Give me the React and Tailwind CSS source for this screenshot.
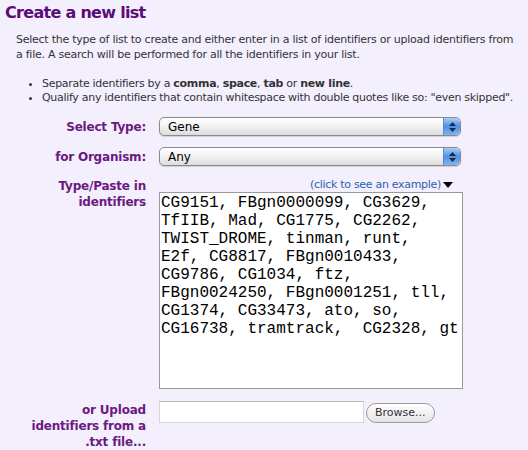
import React from "react";

const ids = [
  "CG9151, FBgn0000099, CG3629,",
  "TfIIB, Mad, CG1775, CG2262,",
  "TWIST_DROME, tinman, runt,",
  "E2f, CG8817, FBgn0010433,",
  "CG9786, CG1034, ftz,",
  "FBgn0024250, FBgn0001251, tll,",
  "CG1374, CG33473, ato, so,",
  "CG16738, tramtrack,  CG2328, gt",
].join("\n");

const Stepper = () => (
  <div className="w-[17px] h-full rounded-r-[5px] border-l border-[#5d87c9] bg-gradient-to-b from-[#a8cdf7] via-[#4f8fe6] to-[#7fb5f3] flex flex-col items-center justify-center gap-[2px]">
    <svg width="7" height="4" viewBox="0 0 7 4">
      <path d="M3.5 0 L7 4 L0 4 Z" fill="#1b2a44" />
    </svg>
    <svg width="7" height="4" viewBox="0 0 7 4">
      <path d="M0 0 L7 0 L3.5 4 Z" fill="#1b2a44" />
    </svg>
  </div>
);

const FakeSelect = ({ value }) => (
  <div className="w-[302px] h-[19px] rounded-[5px] border border-[#8a8a8a] bg-gradient-to-b from-white via-[#f1f1f1] to-[#dcdcdc] flex items-stretch shadow-[0_1px_1px_rgba(0,0,0,0.15)]">
    <span className="flex-1 pl-[8px] text-[12px] leading-[18px] text-black">
      {value}
    </span>
    <Stepper />
  </div>
);

const Label = ({ children }) => (
  <div className="text-right text-[12px] font-bold leading-[16px] tracking-[-0.2px] text-[#6b1a80]">
    {children}
  </div>
);

export default function App() {
  return (
    <div className="w-[528px] h-[450px] overflow-hidden bg-[#f3effd] font-['DejaVu_Sans',sans-serif]">
      {/* Heading */}
      <h1 className="pl-[5px] pt-[2px] text-[16px] font-bold leading-[22px] tracking-[-0.7px] text-[#5c0c78]">
        Create a new list
      </h1>

      {/* Intro */}
      <p className="mt-[8px] pl-[16px] pr-[2px] text-[11px] leading-[15px] text-[#333] tracking-[-0.25px] whitespace-nowrap">
        Select the type of list to create and either enter in a list of
        identifiers or upload identifiers from
        <br />a file. A search will be performed for all the identifiers in
        your list.
      </p>

      <ul className="mt-[15px] pl-[42px] list-disc text-[11px] leading-[14px] text-[#333] tracking-[-0.3px]">
        <li>
          Separate identifiers by a <b>comma</b>, <b>space</b>, <b>tab</b> or{" "}
          <b>new line</b>.
        </li>
        <li>
          Qualify any identifiers that contain whitespace with double quotes
          like so: "even skipped".
        </li>
      </ul>

      {/* Form */}
      <div className="mt-[12px] grid grid-cols-[146px_1fr] gap-x-[13px]">
        <div className="pt-[2px]">
          <Label>Select Type:</Label>
        </div>
        <FakeSelect value="Gene" />

        <div className="mt-[11px] pt-[2px]">
          <Label>for Organism:</Label>
        </div>
        <div className="mt-[11px]">
          <FakeSelect value="Any" />
        </div>

        <div className="mt-[12px]">
          <Label>
            Type/Paste in
            <br />
            identifiers
          </Label>
        </div>
        <div className="mt-[12px]">
          <div className="w-[304px] flex justify-end items-center text-[11px] leading-[14px] tracking-[-0.3px] text-[#2b5fae] pr-[10px]">
            (click to see an example)
            <svg width="10" height="6" viewBox="0 0 10 6" className="ml-[2px]">
              <path d="M0 0 L10 0 L5 6 Z" fill="#000" />
            </svg>
          </div>
          <textarea
            readOnly
            wrap="off"
            defaultValue={ids}
            className="block w-[304px] h-[197px] resize-none overflow-hidden border border-[#999] bg-white px-[1px] pt-[1px] text-[16px] leading-[18px] text-black font-['Liberation_Mono','Courier_New',monospace] outline-none"
          />
        </div>

        <div className="mt-[12px] pt-[1px]">
          <Label>
            or Upload
            <br />
            identifiers from a
            <br />
            .txt file...
          </Label>
        </div>
        <div className="mt-[12px] flex items-start">
          <div className="w-[205px] h-[22px] border border-[#d6d6d6] border-t-[#b8b8b8] bg-white" />
          <button className="ml-[2px] mt-[2px] h-[20px] px-[8px] rounded-full border border-[#9a9a9a] bg-gradient-to-b from-white to-[#e4e4e4] text-[11px] leading-[18px] text-[#333]">
            Browse...
          </button>
        </div>
      </div>
    </div>
  );
}
